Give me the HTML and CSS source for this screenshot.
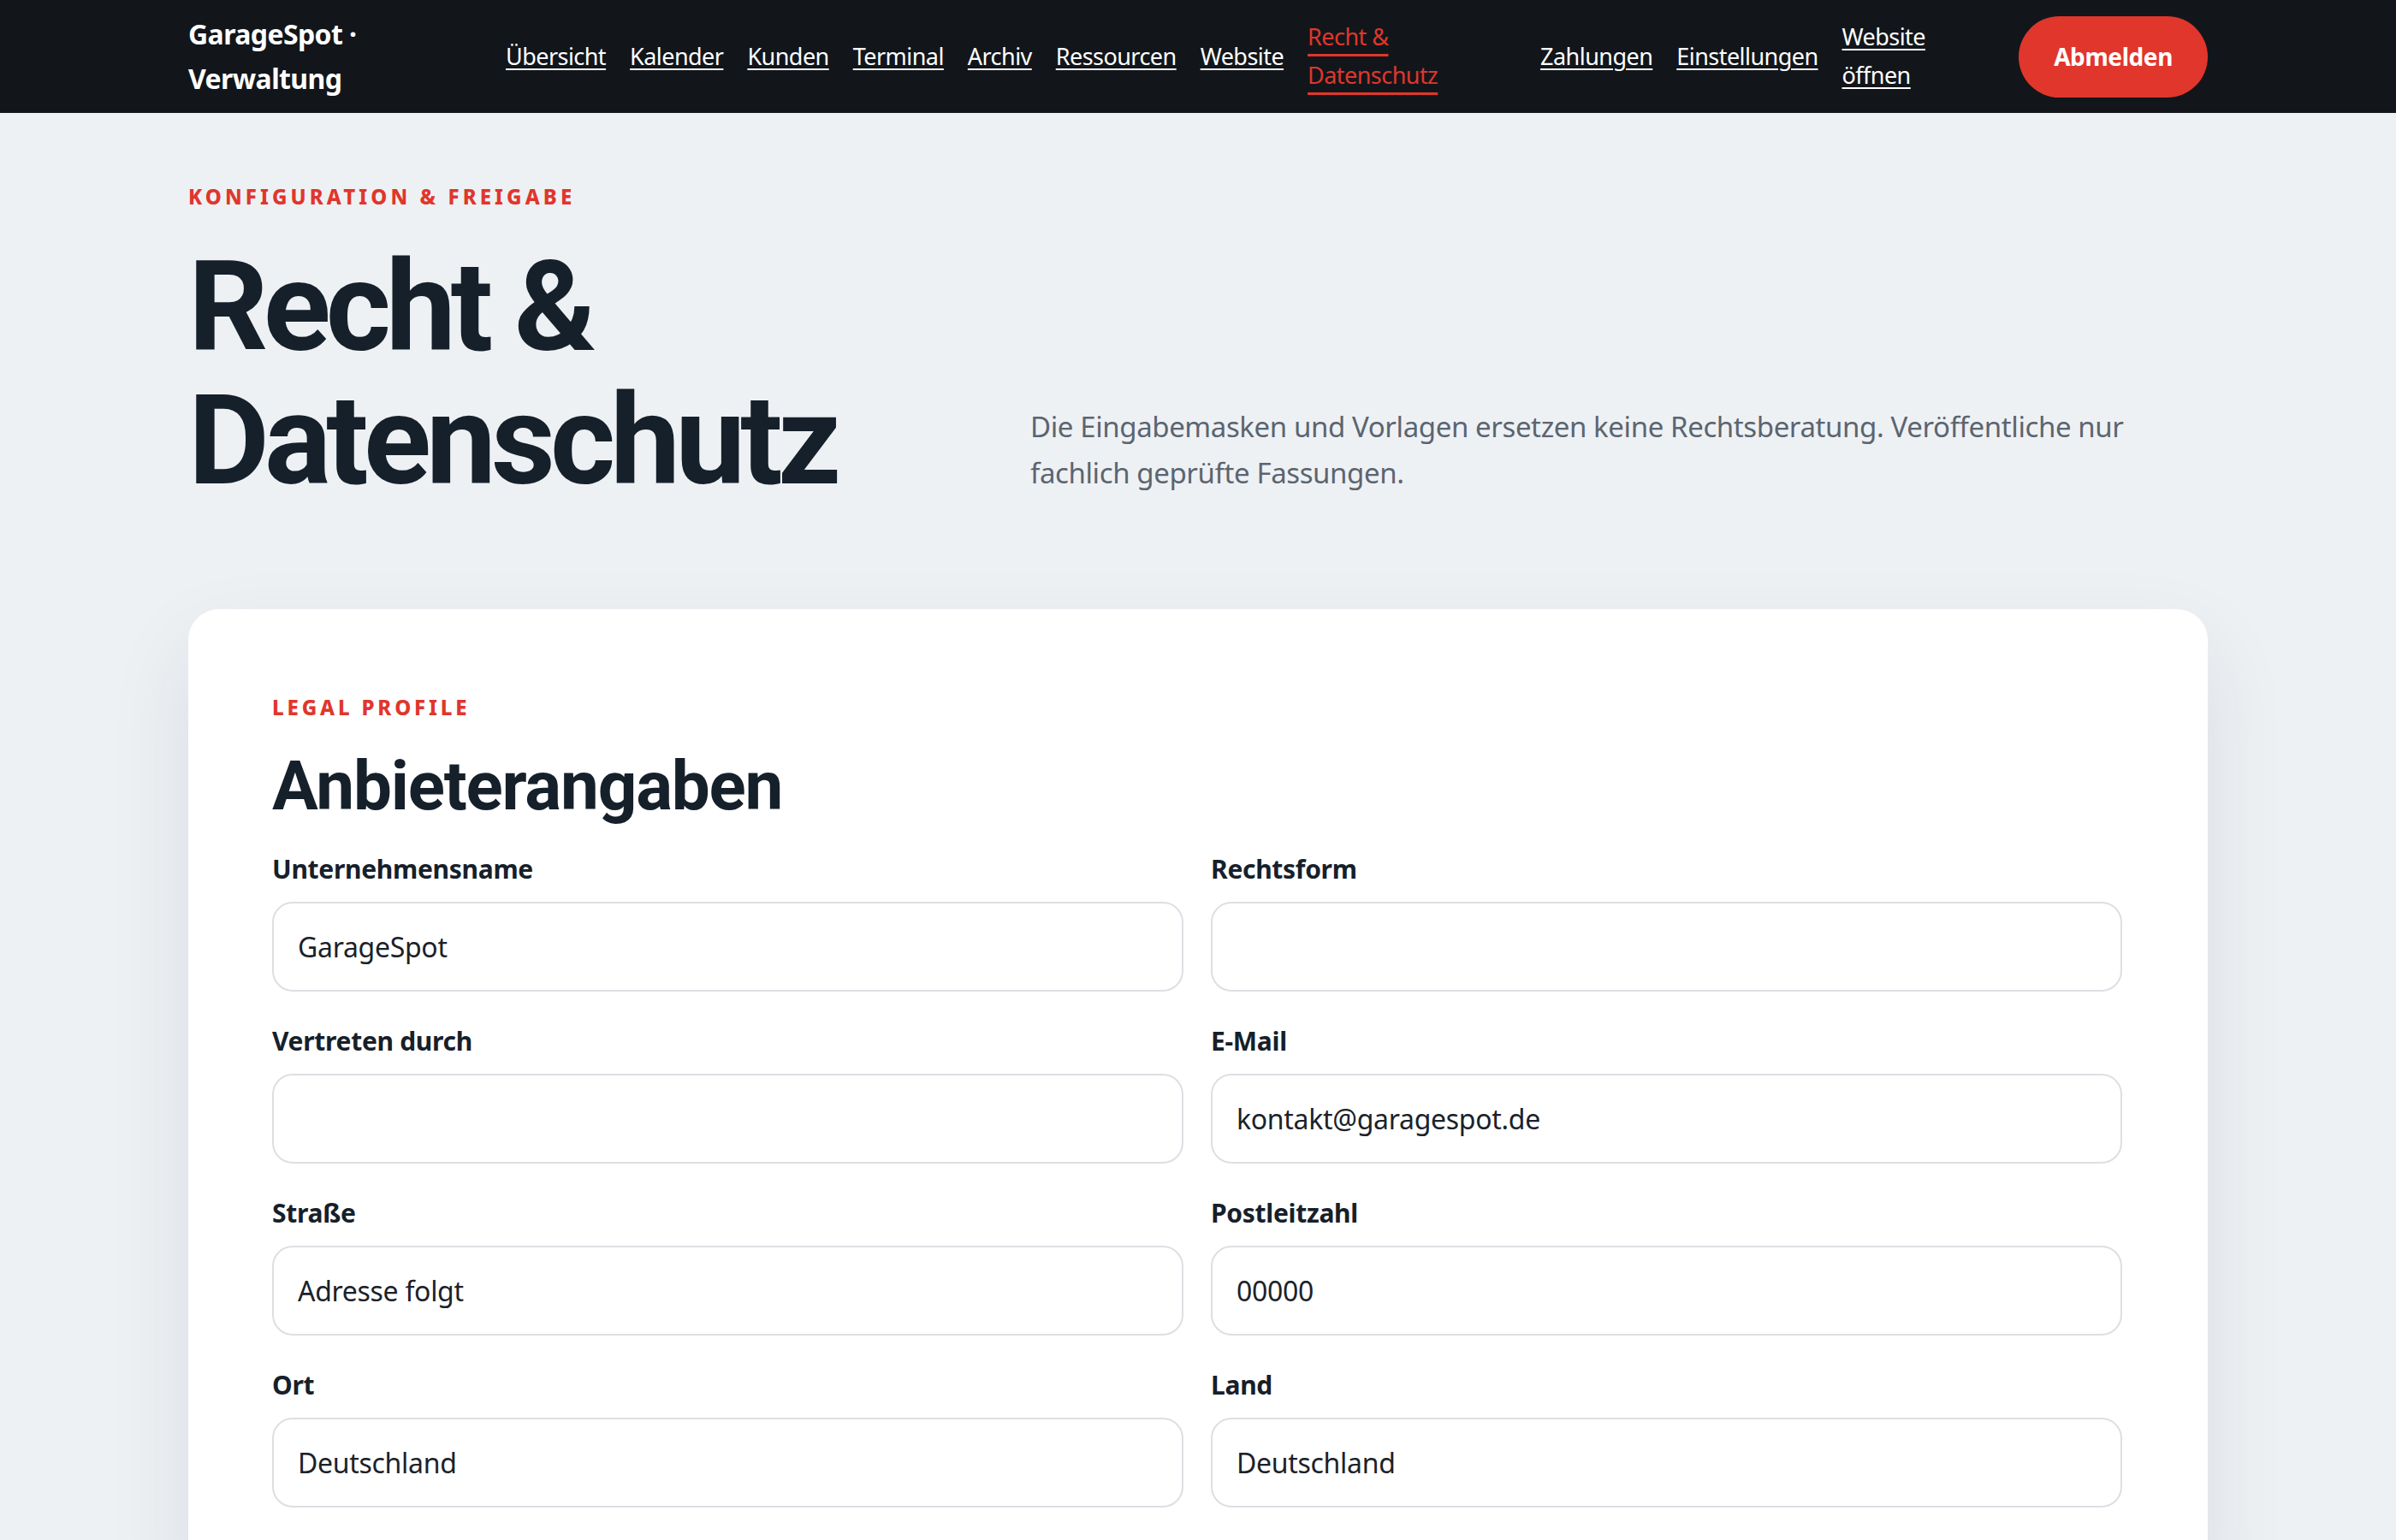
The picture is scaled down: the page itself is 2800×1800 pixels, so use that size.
FILE: index.html
```html
<!DOCTYPE html>
<html lang="de">
<head>
<meta charset="utf-8">
<title>Recht &amp; Datenschutz · GarageSpot Verwaltung</title>
<link rel="stylesheet" href="styles.css">
</head>
<body>
<header class="topbar">
  <div class="topbar-inner">
    <div class="brand">GarageSpot · Verwaltung</div>
    <nav class="nav">
      <a href="#" class="nav-link">Übersicht</a>
      <a href="#" class="nav-link">Kalender</a>
      <a href="#" class="nav-link">Kunden</a>
      <a href="#" class="nav-link">Terminal</a>
      <a href="#" class="nav-link">Archiv</a>
      <a href="#" class="nav-link">Ressourcen</a>
      <a href="#" class="nav-link">Website</a>
      <a href="#" class="nav-link nav-link-active nav-link-wide">Recht &amp; Datenschutz</a>
      <a href="#" class="nav-link">Zahlungen</a>
      <a href="#" class="nav-link">Einstellungen</a>
      <a href="#" class="nav-link nav-link-wrap">Website öffnen</a>
    </nav>
    <button class="logout" type="button">Abmelden</button>
  </div>
</header>

<main class="page">
  <section class="hero">
    <div class="hero-title">
      <p class="eyebrow">Konfiguration &amp; Freigabe</p>
      <h1 class="title">Recht &amp; Datenschutz</h1>
    </div>
    <p class="hero-text">Die Eingabemasken und Vorlagen ersetzen keine Rechtsberatung. Veröffentliche nur fachlich geprüfte Fassungen.</p>
  </section>

  <section class="card">
    <p class="card-eyebrow">Legal Profile</p>
    <h2 class="card-title">Anbieterangaben</h2>
    <div class="form-grid">
      <label class="field">
        <span class="field-label">Unternehmensname</span>
        <input class="field-input" type="text" value="GarageSpot">
      </label>
      <label class="field">
        <span class="field-label">Rechtsform</span>
        <input class="field-input" type="text" value="">
      </label>
      <label class="field">
        <span class="field-label">Vertreten durch</span>
        <input class="field-input" type="text" value="">
      </label>
      <label class="field">
        <span class="field-label">E-Mail</span>
        <input class="field-input" type="text" value="kontakt@garagespot.de">
      </label>
      <label class="field">
        <span class="field-label">Straße</span>
        <input class="field-input" type="text" value="Adresse folgt">
      </label>
      <label class="field">
        <span class="field-label">Postleitzahl</span>
        <input class="field-input" type="text" value="00000">
      </label>
      <label class="field">
        <span class="field-label">Ort</span>
        <input class="field-input" type="text" value="Deutschland">
      </label>
      <label class="field">
        <span class="field-label">Land</span>
        <input class="field-input" type="text" value="Deutschland">
      </label>
    </div>
  </section>
</main>
</body>
</html>
```

FILE: styles.css
```css
* {
  box-sizing: border-box;
}

html, body {
  margin: 0;
  padding: 0;
}

body {
  background: #eef1f4;
  font-family: "Noto Sans", "Open Sans", sans-serif;
  color: #16202a;
}

/* ---------- top bar ---------- */
.topbar {
  background: #12161b;
}

.topbar-inner {
  max-width: 2360px;
  height: 132px;
  margin: 0 auto;
  display: flex;
  align-items: center;
  gap: 56px;
}

.brand {
  flex: 0 0 315px;
  color: #ffffff;
  font-weight: 700;
  font-size: 32px;
  line-height: 52px;
  letter-spacing: -0.6px;
}

.nav {
  display: flex;
  align-items: center;
  gap: 28px;
  flex: 1 1 auto;
}

.nav-link {
  color: #ffffff;
  font-size: 27px;
  line-height: 44.8px;
  letter-spacing: -0.55px;
  white-space: nowrap;
  text-decoration: underline;
  text-decoration-thickness: 2px;
  text-underline-offset: 4px;
}

.nav-link-wide {
  white-space: normal;
  width: 244px;
}

.nav-link-wrap {
  white-space: normal;
  width: 130px;
}

.nav-link-active {
  color: #e0362c;
  text-decoration-color: #e0362c;
  text-decoration-thickness: 3px;
  text-underline-offset: 10px;
}

.logout {
  margin-left: auto;
  flex: 0 0 auto;
  height: 95px;
  padding: 0 41px;
  border: none;
  border-radius: 999px;
  background: #e0362c;
  color: #ffffff;
  font-family: "Noto Sans", "Open Sans", sans-serif;
  font-weight: 700;
  font-size: 28px;
  letter-spacing: -0.4px;
}

/* ---------- page ---------- */
.page {
  max-width: 2360px;
  margin: 0 auto;
}

.hero {
  display: grid;
  grid-template-columns: 888px 1fr;
  column-gap: 96px;
  align-items: end;
  padding: 80px 0 118px;
}

.eyebrow {
  margin: 0 0 34px;
  color: #e0362c;
  font-weight: 800;
  font-size: 24px;
  line-height: 36px;
  letter-spacing: 0.17em;
  text-transform: uppercase;
}

.title {
  margin: 0;
  font-family: Roboto, "Noto Sans", sans-serif;
  font-weight: 700;
  font-size: 146px;
  line-height: 156px;
  letter-spacing: -0.04em;
  color: #15202b;
}

.hero-text {
  margin: 0 0 14px;
  font-size: 33px;
  line-height: 54px;
  letter-spacing: -0.4px;
  color: #5b6570;
}

/* ---------- card ---------- */
.card {
  background: #ffffff;
  border-radius: 36px;
  padding: 100px 100px 98px 98px;
  box-shadow: 0 40px 100px rgba(15, 23, 42, 0.09);
}

.card-eyebrow {
  margin: 0;
  color: #e0362c;
  font-weight: 800;
  font-size: 24px;
  line-height: 30px;
  letter-spacing: 0.16em;
  text-transform: uppercase;
}

.card-title {
  margin: 33px 0 32px;
  font-family: Roboto, "Noto Sans", sans-serif;
  font-weight: 700;
  font-size: 80px;
  line-height: 88px;
  letter-spacing: -0.015em;
  color: #15202b;
}

.form-grid {
  display: grid;
  grid-template-columns: 1fr 1fr;
  column-gap: 32px;
  row-gap: 37px;
}

.field {
  display: flex;
  flex-direction: column;
}

.field-label {
  display: block;
  margin-bottom: 17px;
  font-weight: 700;
  font-size: 30px;
  line-height: 42px;
  letter-spacing: -0.3px;
  color: #16202a;
}

.field-input {
  height: 105px;
  width: 100%;
  padding: 0 28px;
  border: 2px solid #dcdfe3;
  border-radius: 24px;
  background: #ffffff;
  font-family: "Noto Sans", "Open Sans", sans-serif;
  font-size: 32px;
  letter-spacing: -0.3px;
  color: #1b2229;
  outline: none;
}
```
